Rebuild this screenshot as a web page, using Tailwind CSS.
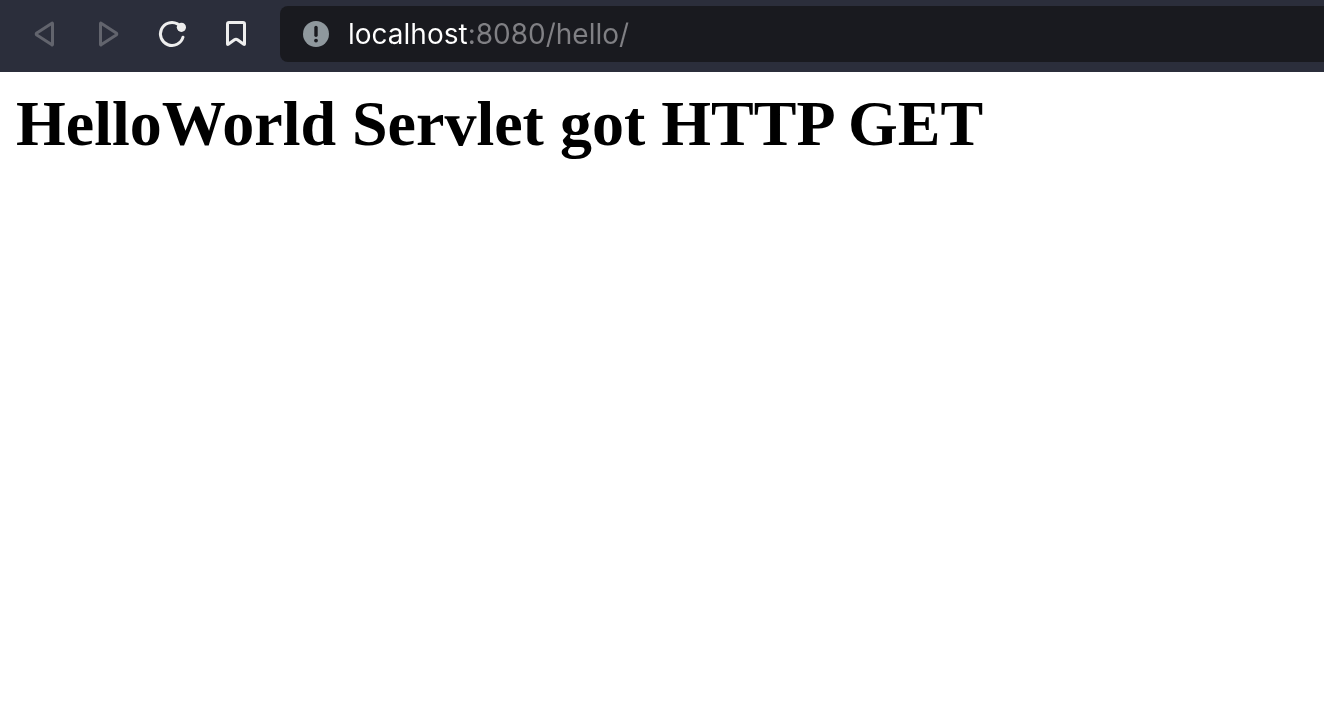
<!DOCTYPE html>
<html lang="en">
<head>
<meta charset="utf-8">
<title>HelloWorld Servlet</title>
<script src="https://cdn.jsdelivr.net/npm/@tailwindcss/browser@4"></script>
</head>
<body class="min-h-screen bg-white">
<header class="flex h-[72px] items-start bg-[#2b2e3b] pt-1.5 pl-3">
  <nav class="flex h-14 shrink-0 items-center" aria-label="Browser navigation">
    <button type="button" aria-label="Back" class="flex h-14 w-16 items-center justify-center text-[#62646d]">
      <svg class="size-8" viewBox="0 0 32 32" fill="none" stroke="currentColor" stroke-width="3" stroke-linejoin="round"><path d="M24.500 5.500v21q0 .8-.6.300L8.800 17q-1.200-1 0-2L23.900 5.200q.6-.5.6.3Z"/></svg>
    </button>
    <button type="button" aria-label="Forward" class="flex h-14 w-16 items-center justify-center text-[#62646d]">
      <svg class="size-8" viewBox="0 0 32 32" fill="none" stroke="currentColor" stroke-width="3" stroke-linejoin="round"><path d="M8.500 5.500v21q0 .8.6.300L24.200 17q1.200-1 0-2L9.100 5.200q-.6-.5-.6.300Z"/></svg>
    </button>
    <button type="button" aria-label="Reload" class="flex h-14 w-16 items-center justify-center text-[#eeeeee]">
      <svg class="size-8" viewBox="0 0 32 32" fill="none" stroke="currentColor" stroke-width="3" stroke-linecap="round"><path d="M21.500 5.900A11.500 11.500 0 1 0 27 19.200"/><circle cx="25.400" cy="9.300" r="4.600" fill="currentColor" stroke="none"/></svg>
    </button>
    <button type="button" aria-label="Bookmark" class="flex h-14 w-16 items-center justify-center text-[#eeeeee]">
      <svg class="size-8" viewBox="0 0 32 32" fill="none" stroke="currentColor" stroke-width="3" stroke-linejoin="round"><path d="M7.500 6Q7.500 4.500 9 4.500h14q1.500 0 1.500 1.500v20q0 .8-.7.300l-6.300-4.500q-1.500-1.100-3 0l-6.300 4.500q-.7.500-.7-.3Z"/></svg>
    </button>
  </nav>
  <div class="ml-3 flex h-14 min-w-0 flex-1 items-center rounded-l-lg bg-[#191a1f] pl-5">
    <button type="button" aria-label="Site information" class="shrink-0">
      <svg class="size-8" viewBox="0 0 32 32"><circle cx="16" cy="16" r="13" fill="#8f989d"/><path d="M16 9.500v7.700" stroke="#191a1f" stroke-width="3.400" stroke-linecap="round"/><circle cx="16" cy="22.600" r="1.900" fill="#191a1f"/></svg>
    </button>
    <input type="text" aria-label="Address" value="localhost:8080/hello/" spellcheck="false" class="ml-4 h-14 min-w-0 flex-1 bg-[linear-gradient(90deg,#ffffff_120px,#808084_120px)] bg-clip-text font-['Inter',sans-serif] text-[28px] text-transparent caret-white outline-none">
  </div>
</header>
<main class="px-4 pt-4">
  <h1 class="font-['Liberation_Serif',serif] text-[64px] leading-[72px] font-bold text-black">HelloWorld Servlet got HTTP GET</h1>
</main>
</body>
</html>
